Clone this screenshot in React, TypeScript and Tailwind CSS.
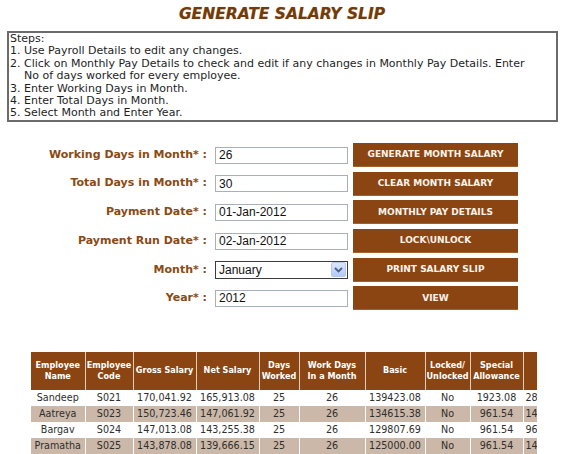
import React from "react";

const steps = [
  "Steps:",
  "1. Use Payroll Details to edit any changes.",
  "2. Click on Monthly Pay Details to check and edit if any changes in Monthly Pay Details. Enter",
  "    No of days worked for every employee.",
  "3. Enter Working Days in Month.",
  "4. Enter Total Days in Month.",
  "5. Select Month and Enter Year.",
];

const fields = [
  { label: "Working Days in Month", value: "26", button: "GENERATE MONTH SALARY" },
  { label: "Total Days in Month", value: "30", button: "CLEAR MONTH SALARY" },
  { label: "Payment Date", value: "01-Jan-2012", button: "MONTHLY PAY DETAILS" },
  { label: "Payment Run Date", value: "02-Jan-2012", button: "LOCK\\UNLOCK" },
  { label: "Month", value: "January", button: "PRINT SALARY SLIP", select: true },
  { label: "Year", value: "2012", button: "VIEW" },
];

const columns = [
  { title: ["Employee", "Name"], w: "w-[54px]" },
  { title: ["Employee", "Code"], w: "w-[48px]" },
  { title: ["Gross Salary"], w: "w-[63px]" },
  { title: ["Net Salary"], w: "w-[63px]" },
  { title: ["Days", "Worked"], w: "w-[40px]" },
  { title: ["Work Days", "In a Month"], w: "w-[66px]" },
  { title: ["Basic"], w: "w-[60px]" },
  { title: ["Locked/", "Unlocked"], w: "w-[45px]" },
  { title: ["Special", "Allowance"], w: "w-[53px]" },
  { title: ["HRA"], w: "w-[50px]" },
];

const rows = [
  ["Sandeep", "S021", "170,041.92", "165,913.08", "25", "26", "139423.08", "No", "1923.08", "2884.62"],
  ["Aatreya", "S023", "150,723.46", "147,061.92", "25", "26", "134615.38", "No", "961.54", "1442.31"],
  ["Bargav", "S024", "147,013.08", "143,255.38", "25", "26", "129807.69", "No", "961.54", "9615.38"],
  ["Pramatha", "S025", "143,878.08", "139,666.15", "25", "26", "125000.00", "No", "961.54", "1442.31"],
];

function Chevron() {
  return (
    <div className="flex h-[15px] w-[15px] items-center justify-center rounded-[2px] border border-[#b4c8f0] bg-gradient-to-b from-[#dce7fd] to-[#b3c9f7]">
      <svg width="9" height="6" viewBox="0 0 9 6">
        <path d="M1 1 L4.5 4.5 L8 1" fill="none" stroke="#4d6185" strokeWidth="1.8" />
      </svg>
    </div>
  );
}

export default function App() {
  return (
    <div className="relative h-[454px] w-[564px] overflow-hidden bg-white font-['DejaVu_Sans',sans-serif]">
      {/* title */}
      <div className="h-[31px] pt-[5px] text-center text-[15.5px] font-bold italic leading-[18px] text-[#713b0c] [text-shadow:0_0_1px_#c9a27e]">
        GENERATE SALARY SLIP
      </div>

      {/* steps */}
      <div className="ml-[7px] h-[91px] w-[551px] border-2 border-[#6b6b6b] px-[1px] text-[11px] leading-[12.4px] text-[#1e1e1e]">
        {steps.map((s) => (
          <div key={s} className="whitespace-pre">
            {s}
          </div>
        ))}
      </div>

      {/* form */}
      <div className="mt-[21px] flex flex-col gap-[4.7px]">
        {fields.map((f) => (
          <div key={f.label} className="flex h-[24px] items-center">
            <div className="w-[207px] whitespace-nowrap text-right text-[11px] font-bold text-[#8a4a14]">
              {f.label}* :
            </div>
            {f.select ? (
              <div className="ml-[8px] flex h-[18px] w-[133px] items-center justify-between border border-[#3c3c3c] bg-white pl-[3px] pr-[1px] font-['Liberation_Sans',sans-serif] text-[12px] text-[#111]">
                <span>{f.value}</span>
                <Chevron />
              </div>
            ) : (
              <div className="ml-[8px] flex h-[17px] w-[133px] items-center border border-[#a7b1bd] bg-white pl-[3px] font-['Liberation_Sans',sans-serif] text-[12px] text-[#111]">
                {f.value}
              </div>
            )}
            <div className="ml-[5px] flex h-[24px] w-[165px] items-center justify-center bg-[#8b4513] text-[9px] font-bold text-[#fbf3ea] shadow-[inset_0_-1px_0_#a0622e]">
              {f.button}
            </div>
          </div>
        ))}
      </div>

      {/* table */}
      <div className="ml-[31px] mt-[41.5px] w-[506px] overflow-hidden">
        <table className="w-[542px] table-fixed border-collapse">
          <thead>
            <tr className="h-[38px] bg-[#8b4513]">
              {columns.map((c) => (
                <th
                  key={c.title.join(" ")}
                  className={`${c.w} whitespace-nowrap border-r border-[#e3cdb8] p-0 text-center font-['DejaVu_Sans_Condensed','DejaVu_Sans',sans-serif] text-[9px] font-bold leading-[11px] text-white`}
                >
                  {c.title.map((t) => (
                    <div key={t}>{t}</div>
                  ))}
                </th>
              ))}
            </tr>
          </thead>
          <tbody>
            {rows.map((r, i) => (
              <tr key={r[0]} className={`h-[16px] ${i % 2 === 1 ? "bg-[#cbb8a8]" : "bg-white"}`}>
                {r.map((v, j) => (
                  <td
                    key={j}
                    className={`border-r border-white p-0 text-[9.6px] leading-[16px] text-[#2e2e2e] whitespace-nowrap ${
                      j === 9 ? "pl-[2px] text-left" : "text-center"
                    }`}
                  >
                    {v}
                  </td>
                ))}
              </tr>
            ))}
          </tbody>
        </table>
      </div>
    </div>
  );
}
